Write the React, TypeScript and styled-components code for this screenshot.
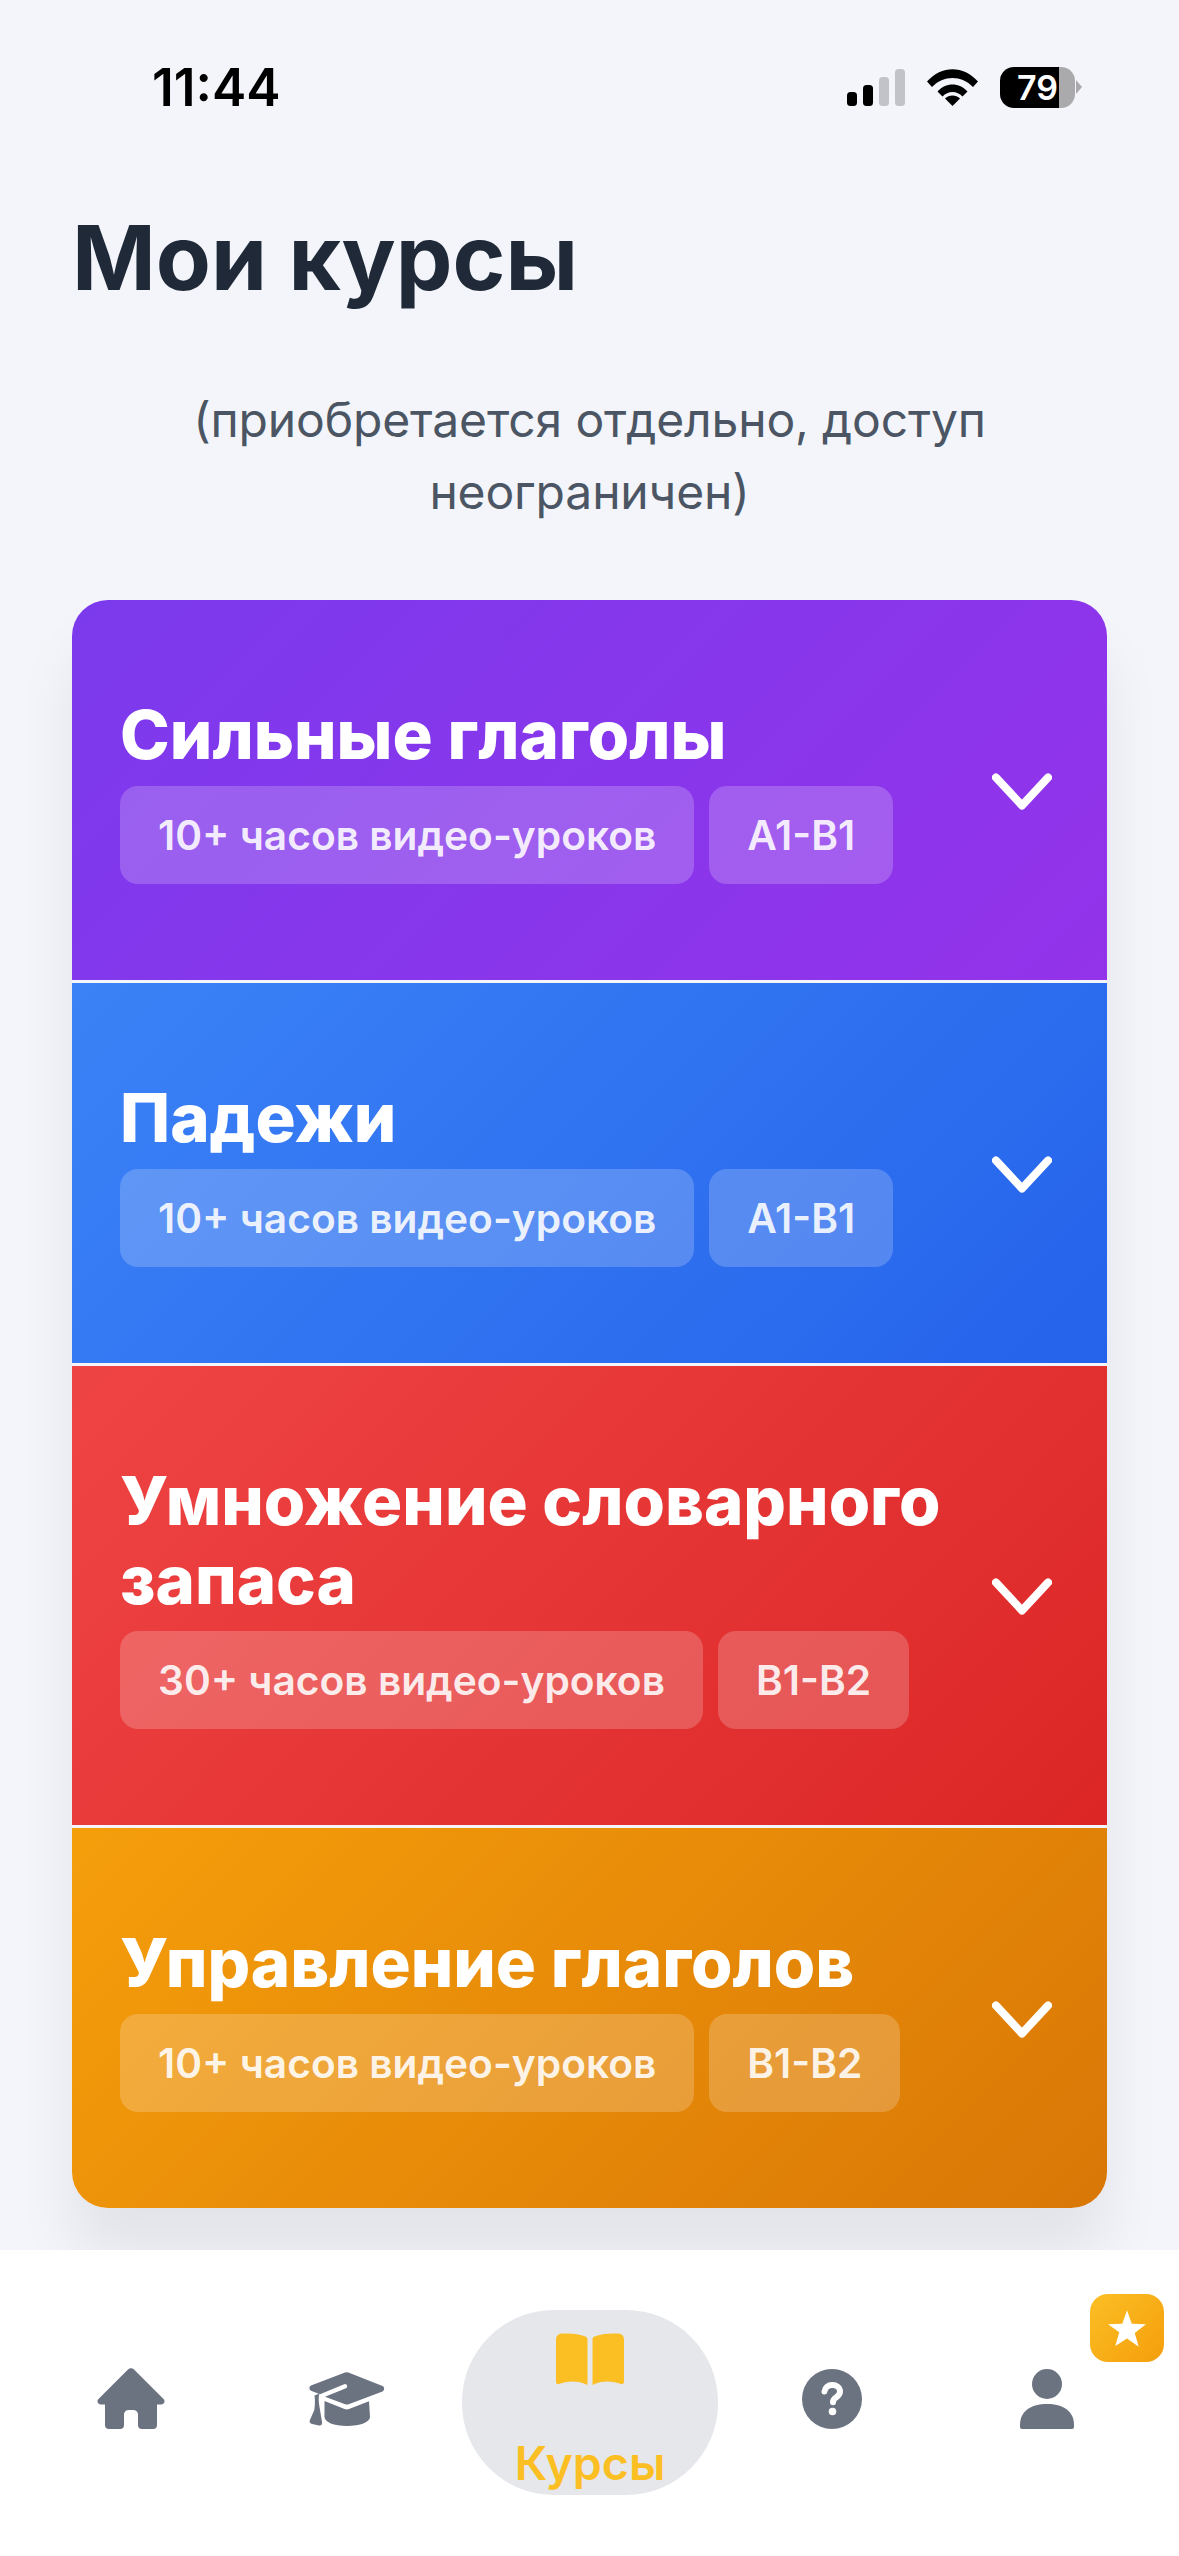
import React from "react";
import styled, { createGlobalStyle } from "styled-components";

const Global = createGlobalStyle`
  html, body { margin: 0; padding: 0; background: #f3f5fa; }
  * { box-sizing: border-box; }
  body { font-family: Inter, "Noto Sans", sans-serif; }
`;

const Screen = styled.div`
  width: 1179px;
  height: 2556px;
  display: flex;
  flex-direction: column;
  overflow: hidden;
  background: #f3f5fa;
`;

const StatusBar = styled.header`
  height: 170px;
  padding: 65px 97px 0 152px;
  display: flex;
  justify-content: space-between;
  align-items: flex-start;
`;

const Clock = styled.div`
  font-size: 51.5px;
  line-height: 44px;
  font-weight: 600;
  color: #000;
`;

const StatusIcons = styled.div`
  display: flex;
  align-items: center;
  gap: 22px;
  height: 44px;
`;

const Battery = styled.div`
  position: relative;
  width: 75px;
  height: 41px;
  border-radius: 14px;
  overflow: hidden;
  background: linear-gradient(90deg, #000 0 59px, #aaaaac 59px);
  color: #fff;
  font-size: 34px;
  font-weight: 600;
  line-height: 41px;
  text-align: center;
`;

const BatteryWrap = styled.div`
  display: flex;
  align-items: center;
  gap: 1px;
`;

const BatteryNub = styled.span`
  width: 0;
  height: 0;
  border-top: 7px solid transparent;
  border-bottom: 7px solid transparent;
  border-left: 6px solid #aaaaac;
`;

const Main = styled.main`
  flex: 1;
  padding: 0 72px;
  display: flex;
  flex-direction: column;
`;

const Title = styled.h1`
  margin: 30px 0 0;
  font-size: 90px;
  line-height: 116px;
  font-weight: 700;
  color: #1f2937;
`;

const Subtitle = styled.p`
  margin: 68px 0 0;
  padding: 0 48px;
  font-size: 48px;
  letter-spacing: -0.15px;
  line-height: 72px;
  font-weight: 400;
  color: #4b5563;
  text-align: center;
`;

const CourseList = styled.section`
  margin-top: 72px;
  border-radius: 36px;
  overflow: hidden;
  box-shadow: 0 50px 60px rgba(0, 0, 0, 0.07);
  display: flex;
  flex-direction: column;
  gap: 3px;
  background: #f3f5fa;
`;

const Course = styled.article<{ $from: string; $to: string }>`
  padding: 96px 48px;
  display: flex;
  align-items: center;
  justify-content: space-between;
  background: linear-gradient(135deg, ${(p) => p.$from}, ${(p) => p.$to});
`;

const CourseBody = styled.div`
  width: 850px;
`;

const CourseTitle = styled.h2`
  margin: -1px 0 12px;
  font-size: 67px;
  line-height: 79px;
  font-weight: 800;
  color: #fff;
`;

const Tags = styled.div`
  display: flex;
  gap: 15px;
`;

const Tag = styled.span`
  height: 98px;
  padding: 0 38px;
  display: flex;
  align-items: center;
  border-radius: 18px;
  background: rgba(255, 255, 255, 0.2);
  color: rgba(255, 255, 255, 0.9);
  font-size: 40.7px;
  font-weight: 600;
`;

const Chevron = styled.svg`
  width: 60px;
  height: 37px;
  margin-top: 2px;
  margin-right: 7px;
  flex: none;
`;

const Nav = styled.nav`
  height: 306px;
  padding: 60px 31px 0 30px;
  background: #fff;
  display: grid;
  grid-template-columns: 202px 230px 256px 228px 202px;
  align-items: start;
`;

const NavItem = styled.div`
  position: relative;
  height: 185px;
  padding-bottom: 8px;
  display: flex;
  align-items: center;
  justify-content: center;
`;

const ActiveItem = styled.div`
  height: 185px;
  border-radius: 92px;
  background: #e5e7eb;
  padding-top: 23px;
  display: flex;
  flex-direction: column;
  align-items: center;
  color: #fbbf24;
`;

const NavLabel = styled.span`
  margin-top: 50px;
  font-size: 46.500px;
  line-height: 56px;
  font-weight: 600;
  color: #fbbf24;
`;

const Badge = styled.div`
  position: absolute;
  top: -16px;
  right: -16px;
  width: 74px;
  height: 68px;
  border-radius: 18px;
  background: linear-gradient(135deg, #fbbf24, #f59e0b);
  display: flex;
  align-items: center;
  justify-content: center;
`;

const courses = [
  { title: "Сильные глаголы", hours: "10+", level: "A1-B1", from: "#7c3aed", to: "#9333ea" },
  { title: "Падежи", hours: "10+", level: "A1-B1", from: "#3b82f6", to: "#2563eb" },
  { title: "Умножение словарного запаса", hours: "30+", level: "B1-B2", from: "#ef4444", to: "#dc2626" },
  { title: "Управление глаголов", hours: "10+", level: "B1-B2", from: "#f59e0b", to: "#d97706" },
];

const Signal = () => (
  <svg width="58" height="37" viewBox="0 0 58 37">
    <rect x="0" y="23" width="10" height="14" rx="3.5" fill="#000" />
    <rect x="16" y="16" width="10" height="21" rx="3.5" fill="#000" />
    <rect x="32" y="8" width="10" height="29" rx="3.5" fill="#c2c3c9" />
    <rect x="48" y="0" width="10" height="37" rx="3.5" fill="#c2c3c9" />
  </svg>
);

const Wifi = () => (
  <svg width="51" height="37" viewBox="0 0 51 37">
    <path d="M0 12.5C14.5-4 36.500-4 51 12.500L46 18C34.500 6 16.500 6 5 18Z" fill="#000" />
    <path d="M10.500 22.500C18.500 13 32.500 13 40.500 22.500L35.500 27.500C30 21.500 21 21.500 15.500 27.500Z" fill="#000" />
    <path d="M18 29.500C22 25.500 29 25.500 33 29.500L25.500 37Z" fill="#000" />
  </svg>
);

const Home = () => (
  <svg width="68" height="62" viewBox="0 0 68 62" fill="#6b7280">
    <path d="M31 1.500a4.200 4.200 0 0 1 6 0L66.500 31a3.200 3.200 0 0 1-2.300 5.500H60V57a4 4 0 0 1-4 4H45a4 4 0 0 1-4-4V46a5 5 0 0 0-5-4H32a5 5 0 0 0-5 4V57a4 4 0 0 1-4 4H12a4 4 0 0 1-4-4V36.500H3.800A3.200 3.200 0 0 1 1.500 31Z" />
  </svg>
);

const Cap = () => (
  <svg width="76" height="54" viewBox="0 0 76 54" fill="#6b7280">
    <path d="M36 .6a5 5 0 0 1 3.400 0L73.500 14a3 3 0 0 1 0 5.400L39.600 32.300a5 5 0 0 1-3.400 0L16 24.800l21-8.500a2.200 2.200 0 0 0-1.800-4L11 22.200 2 18.800a3 3 0 0 1 0-5.300Z" />
    <path d="M15.500 29l20 8a6 6 0 0 0 4.500 0l20-7.800 1 15.800c0 5-10 9-23 9s-22.500-4-22.500-9Z" />
    <path d="M5.500 23.500l4.800-2c-.8 3.500-.8 8 .2 13.500l2.600 15.500c.2 2-1 3.400-3 3l-7-1.500c-2-.5-3-2-2.300-3.700L5.300 38c.8-5 .8-10 .2-14.500Z" />
  </svg>
);

const Book = () => (
  <svg width="68" height="52" viewBox="0 0 68 52" fill="#fbbf24">
    <path d="M0 7C0 3 2 1 6 .6 14 0 23 .6 29.500 3.400c1.500.7 2 1.600 2 3.100V52C23 47.500 12 47.500 3 51c-1.500.5-3-.5-3-2Z" />
    <path d="M68 7c0-4-2-6-6-6.400C54 0 45 .6 38.500 3.400c-1.500.7-2 1.600-2 3.100V52c8.500-4.500 19.500-4.500 28.500-1 1.500.5 3-.5 3-2Z" />
  </svg>
);

const Help = () => (
  <svg width="60" height="60" viewBox="0 0 60 60">
    <circle cx="30" cy="30" r="30" fill="#6b7280" />
    <path d="M22.500 22.500c.5-4 3.500-6.500 7.800-6.500 4.200 0 7.700 2.500 7.700 6.500 0 3.200-2 4.600-4 6-2 1.300-3 2.400-3 4.700" fill="none" stroke="#fff" strokeWidth="6" strokeLinecap="round" />
    <circle cx="30.500" cy="42.500" r="3.800" fill="#fff" />
  </svg>
);

const Person = () => (
  <svg width="54" height="60" viewBox="0 0 54 60" fill="#6b7280">
    <ellipse cx="27" cy="15" rx="15" ry="15" />
    <path d="M0 56c0-14 11-21 27-21s27 7 27 21v2a2 2 0 0 1-2 2H2a2 2 0 0 1-2-2Z" />
  </svg>
);

const Star = () => (
  <svg width="38" height="37" viewBox="0 0 24 23" fill="#fff">
    <path d="M12 0l3 8.500 9 .3-7.100 5.500 2.500 8.700L12 17.800l-7.400 4.700 2.500-8.700L0 8.800l9-.3Z" />
  </svg>
);

export default function App() {
  return (
    <Screen>
      <Global />
      <StatusBar>
        <Clock>11:44</Clock>
        <StatusIcons>
          <Signal />
          <Wifi />
          <BatteryWrap>
            <Battery>79</Battery>
            <BatteryNub />
          </BatteryWrap>
        </StatusIcons>
      </StatusBar>
      <Main>
        <Title>Мои курсы</Title>
        <Subtitle>(приобретается отдельно, доступ неограничен)</Subtitle>
        <CourseList>
          {courses.map((c) => (
            <Course key={c.title} $from={c.from} $to={c.to}>
              <CourseBody>
                <CourseTitle>{c.title}</CourseTitle>
                <Tags>
                  <Tag>{c.hours} часов видео-уроков</Tag>
                  <Tag>{c.level}</Tag>
                </Tags>
              </CourseBody>
              <Chevron viewBox="0 0 60 37" fill="none">
                <path d="M4 4.500l26 28L56 4.500" stroke="#fff" strokeWidth="8" strokeLinecap="round" strokeLinejoin="round" />
              </Chevron>
            </Course>
          ))}
        </CourseList>
      </Main>
      <Nav>
        <NavItem><Home /></NavItem>
        <NavItem><Cap /></NavItem>
        <ActiveItem>
          <Book />
          <NavLabel>Курсы</NavLabel>
        </ActiveItem>
        <NavItem><Help /></NavItem>
        <NavItem>
          <Person />
          <Badge><Star /></Badge>
        </NavItem>
      </Nav>
    </Screen>
  );
}
